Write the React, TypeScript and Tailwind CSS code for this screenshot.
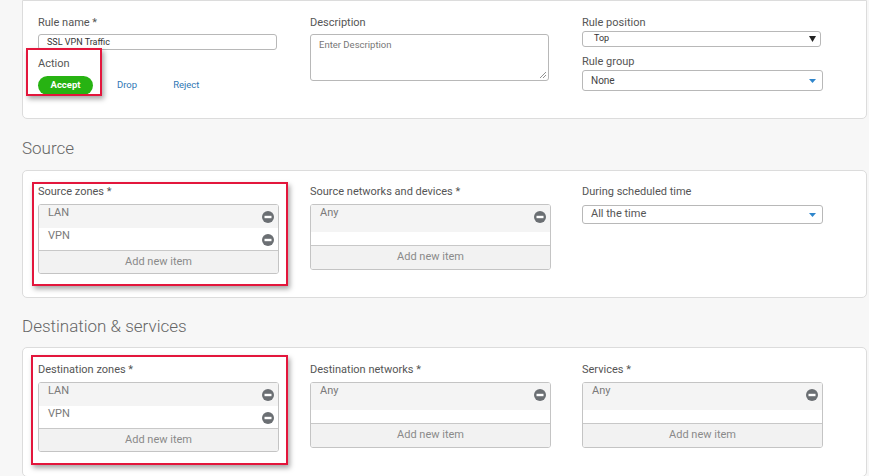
import React from "react";

const font = { fontFamily: "Roboto, 'Liberation Sans', sans-serif" };

function MinusIcon() {
  return (
    <svg width="12" height="12" viewBox="0 0 12 12" className="shrink-0">
      <circle cx="6" cy="6" r="6" fill="#6b6f73" />
      <rect x="2.5" y="4.8" width="7" height="2.4" fill="#fff" />
    </svg>
  );
}

function BlueCaret() {
  return (
    <svg width="7" height="4" viewBox="0 0 7 4">
      <path d="M0 0h7L3.5 4z" fill="#2f86cc" />
    </svg>
  );
}

function Label({ children }: { children: React.ReactNode }) {
  return <div className="h-[14px] text-[11px] leading-[14px] text-[#555]">{children}</div>;
}

function ItemList({ items, height }: { items: string[]; height: number }) {
  return (
    <div className="mt-[5px] flex flex-col rounded-[3px] border border-[#c4c4c4] overflow-hidden" style={{ height }}>
      <div className="flex-1 bg-white">
        {items.map((item, i) => (
          <div
            key={item}
            className={`flex items-start justify-between pl-[9px] pr-[4px] ${i === 0 ? "bg-[#f4f4f4] h-[23px]" : "h-[22px]"} ${items.length === 1 ? "h-[27px]" : ""}`}
          >
            <span className="text-[11px] leading-[14px] text-[#7a7a7a] pt-[1px]">{item}</span>
            <span className="mt-[6px]"><MinusIcon /></span>
          </div>
        ))}
      </div>
      <div className="h-[24px] shrink-0 border-t border-[#c8c8c8] bg-[#f2f2f2] flex items-center justify-center text-[11px] text-[#8a8a8a]">
        Add new item
      </div>
    </div>
  );
}

function Highlight({ children, className }: { children: React.ReactNode; className: string }) {
  return (
    <div className="relative">
      <div className={`absolute border-2 border-[#e3163c] shadow-[2px_3px_5px_rgba(0,0,0,0.35)] pointer-events-none ${className}`} />
      {children}
    </div>
  );
}

export default function App() {
  return (
    <div className="w-[869px] h-[476px] overflow-hidden bg-[#f7f7f7] pl-[22px] pr-[2px]" style={font}>
      {/* General */}
      <div className="h-[119px] rounded-b-[5px] border border-[#dcdcdc] bg-white pl-[15px] pt-[15px] grid grid-cols-[241px_241px_241px] gap-x-[31px]">
        <div>
          <Label>Rule name *</Label>
          <div className="mt-[4px] h-[16px] w-[239px] rounded-[3px] border border-[#b8b8b8] pl-[8px] text-[9px] leading-[14px] text-[#333]">
            SSL VPN Traffic
          </div>
          <Highlight className="-left-[12px] -top-[2px] w-[76px] h-[48px]">
            <div className="pt-[7px]">
              <Label>Action</Label>
              <div className="mt-[5px] flex items-center">
                <div className="h-[19px] w-[55px] rounded-full bg-[#27b312] text-white text-[9.5px] font-bold flex items-center justify-center">
                  Accept
                </div>
                <span className="ml-[24px] text-[9.5px] text-[#2f77b4]">Drop</span>
                <span className="ml-[36px] text-[9.5px] text-[#2f77b4]">Reject</span>
              </div>
            </div>
          </Highlight>
        </div>
        <div>
          <Label>Description</Label>
          <div className="relative mt-[4px] h-[47px] w-[239px] rounded-[3px] border border-[#b8b8b8] pl-[8px] pt-[3px] text-[9.5px] text-[#777]">
            Enter Description
            <svg className="absolute right-[1px] bottom-[1px]" width="8" height="8" viewBox="0 0 8 8">
              <path d="M7 1L1 7M7 4L4 7" stroke="#777" strokeWidth="0.8" />
            </svg>
          </div>
        </div>
        <div>
          <Label>Rule position</Label>
          <div className="mt-[1px] h-[16px] w-[239px] rounded-[3px] border border-[#b8b8b8] pl-[11px] pr-[4px] flex items-center justify-between text-[9px] text-[#333]">
            <span>Top</span>
            <svg width="7" height="6" viewBox="0 0 7 6"><path d="M0 0h7L3.5 6z" fill="#222" /></svg>
          </div>
          <div className="mt-[8px]">
            <Label>Rule group</Label>
          </div>
          <div className="mt-[1px] h-[21px] w-[241px] rounded-[3px] border border-[#b8b8b8] pl-[8px] pr-[6px] flex items-center justify-between text-[10px] text-[#444]">
            <span>None</span>
            <BlueCaret />
          </div>
        </div>
      </div>

      {/* Source */}
      <div className="mt-[17px] h-[24px] text-[17px] leading-[24px] font-light text-[#666]">Source</div>
      <div className="mt-[10px] h-[128px] rounded-[5px] border border-[#dcdcdc] bg-white pl-[15px] pt-[14px] grid grid-cols-[241px_241px_241px] gap-x-[31px] items-start">
        <Highlight className="-left-[6px] -top-[3px] w-[256px] h-[104px]">
          <Label>Source zones *</Label>
          <ItemList items={["LAN", "VPN"]} height={70} />
        </Highlight>
        <div>
          <Label>Source networks and devices *</Label>
          <ItemList items={["Any"]} height={66} />
        </div>
        <div>
          <Label>During scheduled time</Label>
          <div className="mt-[6px] h-[19px] w-[241px] rounded-[3px] border border-[#b8b8b8] pl-[8px] pr-[6px] flex items-center justify-between text-[11px] text-[#555]">
            <span>All the time</span>
            <BlueCaret />
          </div>
        </div>
      </div>

      {/* Destination */}
      <div className="mt-[16px] h-[24px] text-[17px] leading-[24px] font-light text-[#666]">Destination &amp; services</div>
      <div className="mt-[9px] h-[130px] rounded-[5px] border border-[#dcdcdc] bg-white pl-[15px] pt-[15px] grid grid-cols-[241px_241px_241px] gap-x-[31px] items-start">
        <Highlight className="-left-[7px] -top-[8px] w-[257px] h-[110px]">
          <Label>Destination zones *</Label>
          <ItemList items={["LAN", "VPN"]} height={70} />
        </Highlight>
        <div>
          <Label>Destination networks *</Label>
          <ItemList items={["Any"]} height={66} />
        </div>
        <div>
          <Label>Services *</Label>
          <ItemList items={["Any"]} height={66} />
        </div>
      </div>
    </div>
  );
}
